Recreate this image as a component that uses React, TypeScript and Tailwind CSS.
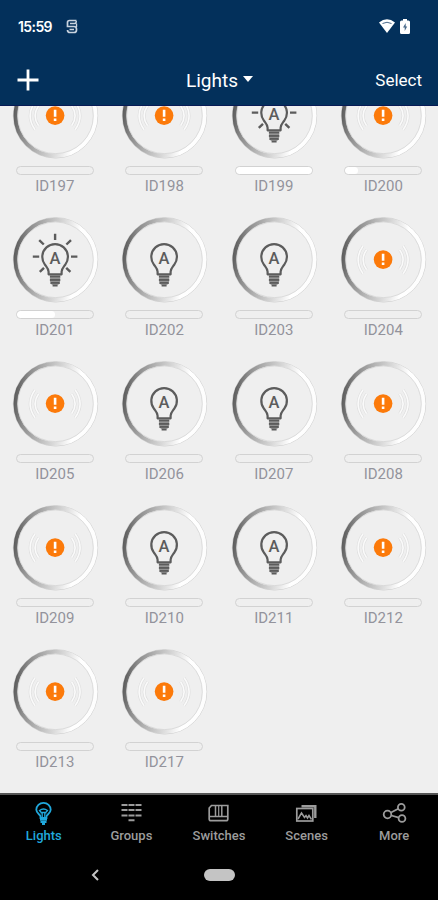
import React from 'react';

type LampState = 'on' | 'off' | 'error';

interface Lamp {
    id: string;
    state: LampState;
    level: number;
}

const lamps: Lamp[] = [
    { id: 'ID197', state: 'error', level: 0 },
    { id: 'ID198', state: 'error', level: 0 },
    { id: 'ID199', state: 'on', level: 100 },
    { id: 'ID200', state: 'error', level: 17 },
    { id: 'ID201', state: 'on', level: 50 },
    { id: 'ID202', state: 'off', level: 0 },
    { id: 'ID203', state: 'off', level: 0 },
    { id: 'ID204', state: 'error', level: 0 },
    { id: 'ID205', state: 'error', level: 0 },
    { id: 'ID206', state: 'off', level: 0 },
    { id: 'ID207', state: 'off', level: 0 },
    { id: 'ID208', state: 'error', level: 0 },
    { id: 'ID209', state: 'error', level: 0 },
    { id: 'ID210', state: 'off', level: 0 },
    { id: 'ID211', state: 'off', level: 0 },
    { id: 'ID212', state: 'error', level: 0 },
    { id: 'ID213', state: 'error', level: 0 },
    { id: 'ID217', state: 'error', level: 0 },
];

const Bulb: React.FC<{ lit: boolean }> = ({ lit }) => (
    <g stroke="#5c5c5c" fill="none">
        {lit && (
            <path
                strokeWidth="2.4"
                d="M42.5 17v6.2M20.2 39.8h6.4M58.4 39.8h6.4M26.6 23.3l4.6 4.4M53.8 27.7l4.6-4.4M27.2 55l4.2-4M53.6 51l4.2 4"
            />
        )}
        <path
            strokeWidth="2.2"
            strokeLinejoin="round"
            d="M36 57.5V55C36 51.8 34 50.2 32.3 47.8A12.8 12.8 0 1 1 52.7 47.8C51 50.2 49 51.8 49 55V57.5Z"
        />
        <path strokeWidth="2.2" d="M37.3 59.9h10.4M37.3 63h10.4M37.8 66h9.4M40 68.5h5" />
        <path stroke="#858585" strokeWidth="1" d="M37.5 61.5h10M37.5 64.5h10M39 67.4h7" />
        <text x="42.5" y="46.8" textAnchor="middle" fontSize="16.5" fontWeight="500" fill="#5c5c5c" stroke="none">A</text>
    </g>
);

const Unreachable: React.FC = () => (
    <g fill="none">
        <g stroke="#dedede" strokeWidth="2.8">
            <path d="M22.5 29Q12.5 43 22.5 57M26 33Q19 43 26 53" />
            <path d="M62.5 29Q72.5 43 62.5 57M59 33Q66 43 59 53" />
        </g>
        <g stroke="#fafafa" strokeWidth="1.6">
            <path d="M22.5 29Q12.5 43 22.5 57M26 33Q19 43 26 53" />
            <path d="M62.5 29Q72.5 43 62.5 57M59 33Q66 43 59 53" />
        </g>
        <circle cx="42.5" cy="42.8" r="9.3" fill="#fc7a0a" />
        <path d="M42.5 37v7M42.5 45.6v2.6" stroke="#fff" strokeWidth="2.6" />
    </g>
);

const LampTile: React.FC<{ lamp: Lamp }> = ({ lamp }) => (
    <div className="flex h-36 flex-col items-center">
        <svg width="88" height="86" viewBox="0 0 88 86" className="shrink-0 overflow-visible">
            <circle cx="44.5" cy="42.8" r="42.2" fill="#efefef" stroke="#cfcfcf" strokeWidth="0.9" />
            <circle cx="44.5" cy="42.8" r="40" fill="none" stroke="url(#ring)" strokeWidth="4" />
            <circle cx="44.5" cy="42.8" r="37.8" fill="none" stroke="#d6d6d6" strokeWidth="0.8" />
            <g transform="translate(1.6 -0.2)">
                {lamp.state === 'error' ? <Unreachable /> : <Bulb lit={lamp.state === 'on'} />}
            </g>
        </svg>
        <div className="mt-[7px] h-[9px] w-[78px] shrink-0 overflow-hidden rounded-full border border-[#d2d2d2] bg-[#efefef]">
            <div className="h-full rounded-full bg-white" style={{ width: `${lamp.level}%` }} />
        </div>
        <div className="mt-px text-[15px] leading-5 text-[#93939c]">{lamp.id}</div>
    </div>
);

const TabIcon: React.FC<{ name: string }> = ({ name }) => {
    switch (name) {
        case 'Lights':
            return (
                <>
                    <path d="M10.5 17V15.5C10.5 13.5 6.3 12.5 6.3 8.8a7.2 7 0 0 1 14.4 0C20.7 12.5 16.5 13.5 16.5 15.5V17Z" strokeWidth="1.8" />
                    <path d="M12.2 17V12.5L9.5 9.5Q13.5 6.5 17.5 9.5L14.8 12.5V17M10 11.5h7" strokeWidth="1.3" />
                    <path d="M10 18.7h7M10.5 21h6M12 23h3" strokeWidth="2" />
                </>
            );
        case 'Groups':
            return <path d="M3.5 4h6M10.5 4h6M17.5 4h6M3.5 9h6M10.5 9h6M17.5 9h6M3.5 14.5h6M10.5 14.5h6M17.5 14.5h6M10.5 19.3h6" strokeWidth="2" />;
        case 'Switches':
            return (
                <>
                    <path d="M6.500 4.500H22.800V18Q22.800 19.700 21 19.700H6Q4.200 19.700 4.200 18V7Z" strokeWidth="1.7" />
                    <path d="M10.500 5v10.500M16.800 5v10.500M4.500 15.500h18" strokeWidth="1.5" />
                    <path d="M13.700 5v10.500" strokeWidth="1.200" />
                </>
            );
        case 'Scenes':
            return (
                <>
                    <rect x="3.8" y="7.5" width="16" height="12.5" strokeWidth="1.7" />
                    <path d="M8.5 5.2H22.3V17" strokeWidth="2.4" />
                    <path d="M5 18l3.5-6 3 4.5 1.5-2 1.5 2.5 1.5-2.5 2.5 4" strokeWidth="1.5" />
                </>
            );
        default:
            return (
                <g strokeWidth="1.8">
                    <circle cx="6.5" cy="13.5" r="3.8" />
                    <circle cx="20.3" cy="6.3" r="3.4" />
                    <circle cx="21" cy="17.5" r="3.4" />
                    <path d="M10 11.5l7.3-3.8M10.3 14.5l7.5 2.2" />
                </g>
            );
    }
};

const tabs = ['Lights', 'Groups', 'Switches', 'Scenes', 'More'];

const App: React.FC = () => (
    <div className="flex h-[900px] w-[438px] flex-col overflow-hidden bg-[#efefef] font-['Roboto',sans-serif]">
        {/* Shared gradient for the metal rings */}
        <svg width="0" height="0" className="absolute">
            <defs>
                <linearGradient id="ring" gradientUnits="userSpaceOnUse" x1="2" y1="37" x2="86" y2="49">
                    <stop offset="0" stopColor="#585858" />
                    <stop offset="0.15" stopColor="#8c8c8c" />
                    <stop offset="0.35" stopColor="#b6b6b6" />
                    <stop offset="0.55" stopColor="#dadada" />
                    <stop offset="0.75" stopColor="#ffffff" />
                    <stop offset="1" stopColor="#fdfdfd" />
                </linearGradient>
            </defs>
        </svg>

        <header className="flex h-[106px] shrink-0 flex-col border-b border-[#071a55] bg-[#03305b] text-white">
            <div className="flex h-[54px] items-center pb-0.5 pl-[18px] pr-[28px]">
                <span className="w-[35px] font-['Inter',sans-serif] text-[14px] font-semibold tracking-[-0.6px]">15:59</span>
                <svg width="12" height="15" viewBox="0 0 12 15" className="ml-[13px]" fill="none" stroke="#c9d3df" strokeWidth="1.7">
                    <path d="M10.5 1.5H3.5Q1.5 1.5 1.5 3.5V7.500H8Q10.5 7.500 10.5 10V11Q10.5 13.5 8 13.5H4Q1.5 13.5 1.5 11" />
                    <path d="M4 4.5H8.5Q10.3 4.5 10.3 2M10.5 8V4.5M3.5 10.5H8" strokeWidth="1.4" />
                </svg>
                <svg width="16" height="14" viewBox="0 0 16 14" className="ml-auto">
                    <path d="M0 3.5Q8-3 16 3.5L8 14Z" fill="#fff" />
                    <path d="M3.5 4.5Q8 2 12.5 4.5" fill="none" stroke="#4a6a8a" strokeWidth="1" />
                </svg>
                <svg width="10" height="15" viewBox="0 0 10 15" className="ml-[5px]">
                    <path d="M3 0h4v1.5h1.5Q10 1.5 10 3v10.5Q10 15 8.5 15h-7Q0 15 0 13.5V3Q0 1.5 1.5 1.5H3Z" fill="#fff" />
                    <path d="M5.7 4L3 8.5h1.700V12L7.200 7.500H5.700Z" fill="#4a6a8a" />
                </svg>
            </div>
            <div className="grid h-[51px] grid-cols-3 items-center pl-[17px] pr-[16px]">
                <svg width="22" height="22" viewBox="0 0 22 22" stroke="#fff" strokeWidth="2.8">
                    <path d="M11 0.5v21M0.5 11h21" />
                </svg>
                <div className="flex items-center justify-center gap-[5px] pt-[3px] text-[19px]">
                    Lights
                    <svg width="10" height="6" viewBox="0 0 10 6" className="-mt-1">
                        <path d="M0 0h10L5 6Z" fill="#fff" />
                    </svg>
                </div>
                <span className="pt-[3px] text-right text-[17px]">Select</span>
            </div>
        </header>

        <main className="h-[687px] shrink-0 overflow-hidden">
            <div className="-mt-[33px] grid grid-cols-4">
                {lamps.map(lamp => (
                    <LampTile key={lamp.id} lamp={lamp} />
                ))}
            </div>
        </main>

        <footer className="flex-1 border-t-2 border-[#555] bg-black">
            <nav className="grid grid-cols-5 pt-[6px]">
                {tabs.map((tab, idx) => (
                    <div
                        key={tab}
                        className={idx === 0 ? 'flex flex-col items-center text-[#20a8dc]' : 'flex flex-col items-center text-[#9c9c9c]'}
                    >
                        <svg width="27" height="25" viewBox="0 0 27 25" fill="none" stroke="currentColor">
                            <TabIcon name={tab} />
                        </svg>
                        <span className="mt-0.5 text-[13px] font-medium leading-4">{tab}</span>
                    </div>
                ))}
            </nav>
            <div className="mt-[25px] flex h-3 items-center pl-[91px]">
                <svg width="8" height="12" viewBox="0 0 8 12" fill="none" stroke="#c4c4c4" strokeWidth="2">
                    <path d="M7 1L2 6l5 5" />
                </svg>
                <div className="ml-[105px] h-3 w-[31px] rounded-full bg-[#c4c4c4]" />
            </div>
        </footer>
    </div>
);

export default App;
